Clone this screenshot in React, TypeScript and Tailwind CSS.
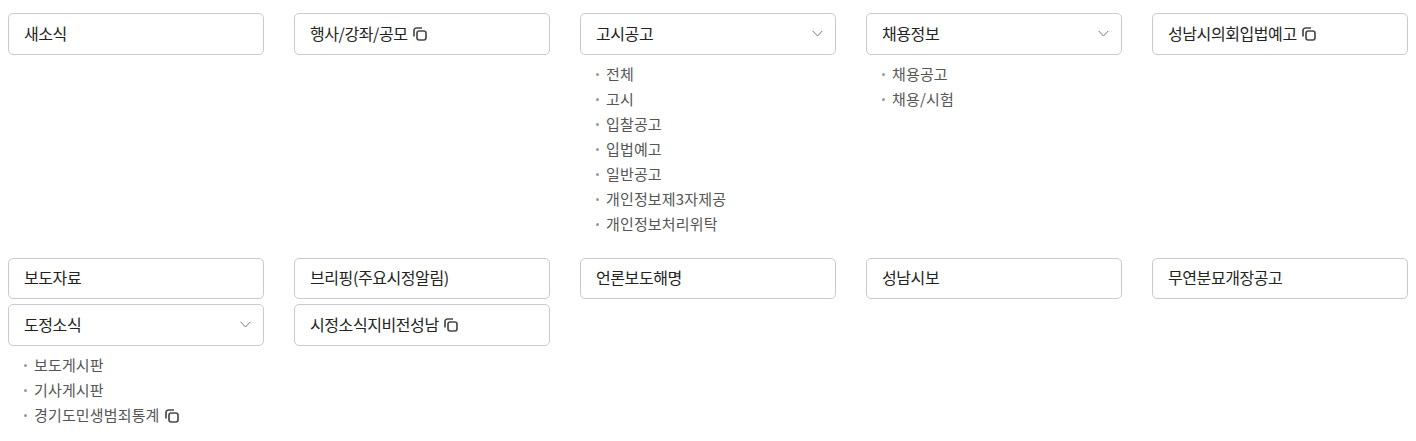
import React from 'react';

const CopyIcon = ({ className = '' }: { className?: string }) => (
    <svg viewBox="0 0 14 14" fill="none" stroke="currentColor" strokeWidth="1.7" className={`inline-block w-[14px] h-[14px] text-[#4a4a4a] ${className}`}>
        <path d="M1 9.5V3.5A2.5 2.5 0 0 1 3.5 1H9" />
        <rect x="4" y="4" width="9" height="9" rx="2.2" />
    </svg>
);

const Chevron = () => (
    <svg viewBox="0 0 11 7" fill="none" stroke="#777" strokeWidth="1" className="w-[11px] h-[7px]">
        <path d="M0.6 0.8L5.5 6L10.4 0.8" />
    </svg>
);

type Menu = { title: string; copy?: boolean; items?: { label: string; copy?: boolean }[] };

const rows: { menus: Menu[]; className: string }[] = [
    {
        className: 'pt-[13px] h-[258px]',
        menus: [
            { title: '새소식' },
            { title: '행사/강좌/공모', copy: true },
            {
                title: '고시공고',
                items: ['전체', '고시', '입찰공고', '입법예고', '일반공고', '개인정보제3자제공', '개인정보처리위탁'].map((label) => ({ label })),
            },
            { title: '채용정보', items: [{ label: '채용공고' }, { label: '채용/시험' }] },
            { title: '성남시의회입법예고', copy: true },
        ],
    },
    {
        className: 'h-[46px]',
        menus: [
            { title: '보도자료' },
            { title: '브리핑(주요시정알림)' },
            { title: '언론보도해명' },
            { title: '성남시보' },
            { title: '무연분묘개장공고' },
        ],
    },
    {
        className: '',
        menus: [
            {
                title: '도정소식',
                items: [{ label: '보도게시판' }, { label: '기사게시판' }, { label: '경기도민생범죄통계', copy: true }],
            },
            { title: '시정소식지비전성남', copy: true },
        ],
    },
];

const MenuBox: React.FC<{ menu: Menu; short: boolean }> = ({ menu, short }) => (
    <div>
        <div className={`flex items-center justify-between border border-[#c9c9d2] rounded-[5px] bg-white pl-[15px] pr-[12px] ${short ? 'h-[41px] pb-[3px]' : 'h-[42px] pb-[2px]'}`}>
            <span className="flex items-center gap-[5px] text-[16px] font-normal tracking-[-0.42px] text-[#222]">
                {menu.title}
                {menu.copy && <CopyIcon className="mt-[1px]" />}
            </span>
            {menu.items && <Chevron />}
        </div>
        {menu.items && (
            <ul className="pt-[7px] pl-[15px]">
                {menu.items.map((item) => (
                    <li key={item.label} className="flex items-center h-[25px] text-[15px] tracking-[0.15px] text-[#555]">
                        <span className="w-[3px] h-[3px] rounded-full bg-[#999] ml-[1px] mr-[7px]"></span>
                        {item.label}
                        {item.copy && <CopyIcon className="ml-[5px] mt-[1px]" />}
                    </li>
                ))}
            </ul>
        )}
    </div>
);

export default function App() {
    return (
        <div className="bg-white px-[8px] h-[441px] overflow-hidden font-['Noto_Sans_CJK_KR','Noto_Sans',sans-serif]">
            {rows.map((row, i) => (
                <div key={i} className={`grid grid-cols-5 gap-x-[30px] ${row.className}`}>
                    {row.menus.map((menu) => (
                        <MenuBox key={menu.title} menu={menu} short={i === 1} />
                    ))}
                </div>
            ))}
        </div>
    );
}
